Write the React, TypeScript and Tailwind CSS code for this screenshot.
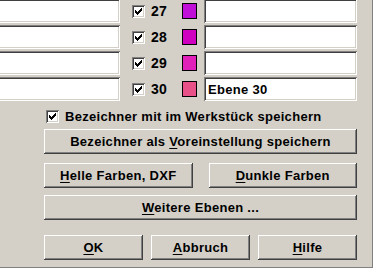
import React from "react";

const sunken =
  "shadow-[inset_1px_1px_0_#808080,inset_-1px_-1px_0_#ffffff,inset_2px_2px_0_#404040,inset_-2px_-2px_0_#d4d0c8]";
const raised =
  "shadow-[inset_-1px_-1px_0_#404040,inset_1px_1px_0_#ffffff,inset_-2px_-2px_0_#808080,inset_2px_2px_0_#d4d0c8]";

function Check() {
  return (
    <div className={`w-[13px] h-[13px] bg-white shrink-0 flex items-center justify-center ${sunken}`}>
      <svg width="7" height="7" viewBox="0 0 7 7" shapeRendering="crispEdges">
        <path d="M6 0h1v3h-1v1h-1v1h-1v1h-1v1h-1v-1h-1v-1h-1v-3h1v1h1v1h1v-1h1v-1h1z" fill="#000" />
      </svg>
    </div>
  );
}

function Btn({ children, className = "" }: { children: React.ReactNode; className?: string }) {
  return (
    <div className={`h-[25px] bg-[#d4d0c8] flex items-center justify-center ${raised} ${className}`}>
      {children}
    </div>
  );
}

const U = ({ children }: { children: React.ReactNode }) => (
  <span className="underline decoration-1 underline-offset-2">{children}</span>
);

const rows = [
  { n: 27, c: "bg-[#c010d8]", t: "" },
  { n: 28, c: "bg-[#d000c0]", t: "" },
  { n: 29, c: "bg-[#e020b8]", t: "" },
  { n: 30, c: "bg-[#e85088]", t: "Ebene 30" },
];

export default function App() {
  return (
    <div className="w-[374px] h-[269px] bg-white overflow-hidden font-['Liberation_Sans',Arial,sans-serif] font-bold text-[13px] tracking-[0.3px] text-black leading-none">
      <div className="w-[373px] h-[268px] bg-[#d4d0c8] border-r border-b border-[#808080] flex flex-col">
        <div className="flex flex-col gap-[2px] -mt-px">
          {rows.map((r) => (
            <div key={r.n} className="flex items-center h-[24px]">
              <div className={`ml-[-4px] w-[124px] h-[24px] bg-white shrink-0 ${sunken}`} />
              <div className="ml-[12px]">
                <Check />
              </div>
              <div className="ml-[6px] w-[31px] shrink-0 text-[14px]">{r.n}</div>
              <div className={`w-[15px] h-[16px] border border-black shrink-0 ${r.c}`} />
              <div className={`ml-[7px] w-[153px] h-[24px] bg-white shrink-0 flex items-center pl-[4px] ${sunken}`}>
                {r.t}
              </div>
            </div>
          ))}
        </div>
        <div className="mt-[9px] ml-[46px] h-[13px] flex items-center">
          <Check />
          <span className="ml-[6px]">Bezeichner mit im Werkstück speichern</span>
        </div>
        <Btn className="mt-[6px] ml-[44px] w-[313px]">
          <span>
            Bezeichner als <U>V</U>oreinstellung speichern
          </span>
        </Btn>
        <div className="mt-[9px] ml-[44px] w-[313px] grid grid-cols-2 gap-4">
          <Btn>
            <span>
              <U>H</U>elle Farben, DXF
            </span>
          </Btn>
          <Btn>
            <span>
              <U>D</U>unkle Farben
            </span>
          </Btn>
        </div>
        <Btn className="mt-[7px] ml-[44px] w-[313px]">
          <span>
            <U>W</U>eitere Ebenen ...
          </span>
        </Btn>
        <div className="mt-[15px] ml-[44px] w-[313px] grid grid-cols-3 gap-2">
          <Btn>
            <span>
              <U>O</U>K
            </span>
          </Btn>
          <Btn>
            <span>
              <U>A</U>bbruch
            </span>
          </Btn>
          <Btn>
            <span>
              <U>H</U>ilfe
            </span>
          </Btn>
        </div>
      </div>
    </div>
  );
}
